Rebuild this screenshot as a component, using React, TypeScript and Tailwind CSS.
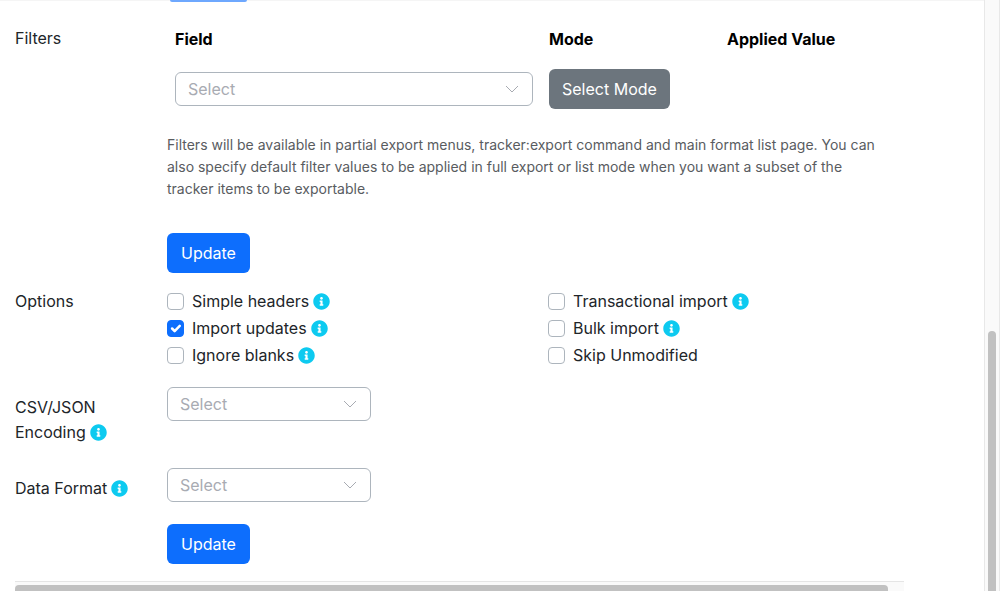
import React, { useState } from 'react';
import { FaInfoCircle } from 'react-icons/fa';

interface Option {
  id: string;
  label: string;
  info: boolean;
  checked?: boolean;
}

const leftOptions: Option[] = [
  { id: 'simple-headers', label: 'Simple headers', info: true },
  { id: 'import-updates', label: 'Import updates', info: true, checked: true },
  { id: 'ignore-blanks', label: 'Ignore blanks', info: true },
];

const rightOptions: Option[] = [
  { id: 'transactional', label: 'Transactional import', info: true },
  { id: 'bulk-import', label: 'Bulk import', info: true },
  { id: 'skip-unmodified', label: 'Skip Unmodified', info: false },
];

const InfoIcon = () => <FaInfoCircle className="inline-block size-[17px] shrink-0 text-[#0dcaf0]" aria-hidden="true" />;

const SelectBox = ({ id, label }: { id: string; label?: string }) => (
  <div className="relative">
    <select
      id={id}
      aria-label={label}
      defaultValue=""
      className="block h-[34px] w-full appearance-none rounded-md border border-[#adb5bd] bg-white pl-3 pr-9 text-base text-[#a8abb2] outline-none focus:border-[#0d6efd]"
    >
      <option value="">Select</option>
    </select>
    <svg viewBox="0 0 14 8" className="pointer-events-none absolute right-[14px] top-[13px] h-2 w-[14px]" fill="none" stroke="#a8abb2" strokeWidth="1">
      <path d="M1 1l6 6 6-6" />
    </svg>
  </div>
);

const UpdateButton = () => (
  <button type="submit" className="h-10 rounded-md bg-[#0d6efd] px-[14px] text-base text-white hover:bg-[#0b5ed7]">
    Update
  </button>
);

const OptionCheck = ({ option }: { option: Option }) => {
  const [checked, setChecked] = useState(!!option.checked);

  return (
    <div className="flex h-[27px] items-center">
      <span className="relative mr-2 size-[17px] shrink-0">
        <input
          id={option.id}
          type="checkbox"
          checked={checked}
          onChange={(e) => setChecked(e.target.checked)}
          className="block size-[17px] appearance-none rounded border border-[#adb5bd] bg-white checked:border-[#0d6efd] checked:bg-[#0d6efd]"
        />
        {checked && (
          <svg viewBox="0 0 20 20" className="pointer-events-none absolute inset-0 size-[17px]" fill="none" stroke="#fff" strokeWidth="3" strokeLinecap="round" strokeLinejoin="round">
            <path d="M6 10l3 3 6-6" />
          </svg>
        )}
      </span>
      <label htmlFor={option.id} className="mr-1">{option.label}</label>
      {option.info && <InfoIcon />}
    </div>
  );
};

export default function App() {
  return (
    <div className="flex min-h-screen bg-white font-['Inter',sans-serif] text-base leading-[25px] text-[#212529]">
      <main className="min-w-0 flex-1 pl-[15px] pr-20 shadow-[inset_0_1px_0_#f5f5f5]">
        {/* Bottom edge of the button in the section above */}
        <div className="ml-[155px] h-0.5 w-[77px] rounded-b-sm bg-[#6ea8fe]" />

        <form onSubmit={(e) => e.preventDefault()}>
          <div className="grid grid-cols-[152px_minmax(0,1fr)] pt-[17px]">
            <div className="pt-[7px]">Filters</div>
            <div>
              <table className="w-full table-fixed text-left">
                <colgroup>
                  <col />
                  <col className="w-[178px]" />
                  <col className="w-[185px]" />
                </colgroup>
                <thead>
                  <tr className="h-10 text-black">
                    <th className="px-2 font-bold">Field</th>
                    <th className="px-2 font-bold">Mode</th>
                    <th className="px-2 font-bold">Applied Value</th>
                  </tr>
                </thead>
                <tbody>
                  <tr className="h-[60px]">
                    <td className="px-2"><SelectBox id="filter-field" label="Field" /></td>
                    <td className="px-2">
                      <button type="button" className="h-10 whitespace-nowrap rounded-md bg-[#6c757d] px-[13px] text-white">Select Mode</button>
                    </td>
                    <td className="px-2"></td>
                  </tr>
                </tbody>
              </table>
              <p className="mt-[15px] pr-4 text-sm leading-[22px] text-[#595c5f]">
                Filters will be available in partial export menus, tracker:export command and main format list page. You can
                also specify default filter values to be applied in full export or list mode when you want a subset of the
                tracker items to be exportable.
              </p>
              <div className="mt-[33px]"><UpdateButton /></div>
            </div>
          </div>

          <div className="mt-[15px] grid grid-cols-[152px_minmax(0,1fr)]">
            <div className="pt-px">Options</div>
            <div className="grid grid-cols-[381px_minmax(0,1fr)]">
              <div>{leftOptions.map((o) => <OptionCheck key={o.id} option={o} />)}</div>
              <div>{rightOptions.map((o) => <OptionCheck key={o.id} option={o} />)}</div>
            </div>
          </div>

          <div className="mt-[18px] grid grid-cols-[152px_minmax(0,1fr)]">
            <label htmlFor="encoding" className="pt-2">
              CSV/JSON
              <span className="flex items-center gap-1">Encoding <InfoIcon /></span>
            </label>
            <div className="w-[204px]"><SelectBox id="encoding" /></div>
          </div>

          <div className="mt-[23px] grid grid-cols-[152px_minmax(0,1fr)]">
            <label htmlFor="data-format" className="flex items-center gap-1 pt-[7px]">
              Data Format <InfoIcon />
            </label>
            <div className="w-[204px]"><SelectBox id="data-format" /></div>
          </div>

          <div className="ml-[152px] mt-[22px]"><UpdateButton /></div>
        </form>

        {/* Horizontal scroll track */}
        <div className="mt-[17px] h-[10px] overflow-hidden border-t border-[#e5e5e5] bg-[#fafafa] pr-4 pt-[3px]">
          <div className="h-2 rounded-t bg-[#c1c1c1]" />
        </div>
      </main>

      {/* Vertical scroll track */}
      <aside className="flex w-4 flex-col border-x border-[#e8e8e8] bg-[#fafafa] px-[3px]">
        <div className="flex-[331]" />
        <div className="flex-[260] rounded-t-full bg-[#c1c1c1]" />
      </aside>
    </div>
  );
}
